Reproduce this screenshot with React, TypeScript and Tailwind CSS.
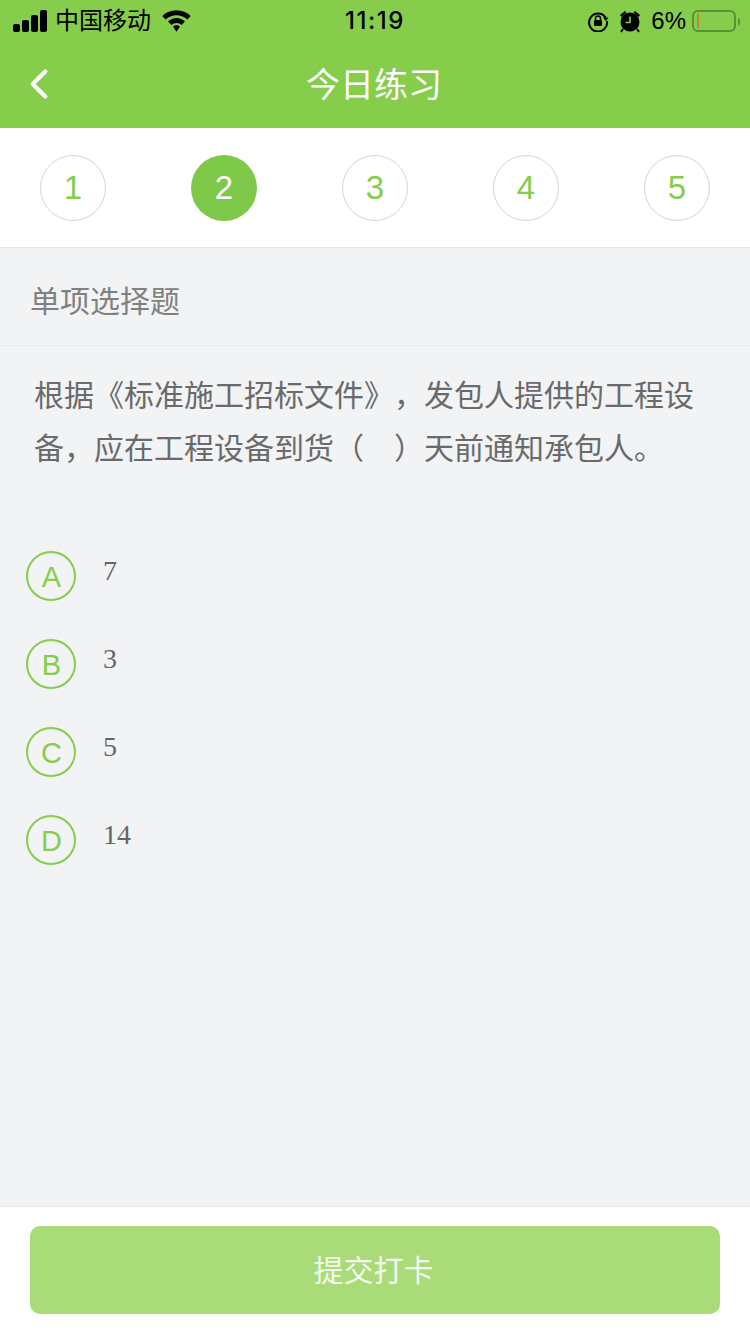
import { ChevronLeft } from 'lucide-react';

const SANS = "font-['Liberation_Sans','Noto_Sans_CJK_SC',sans-serif]";

const STEPS = [1, 2, 3, 4, 5];
const OPTIONS = [
  { key: 'A', text: '7' },
  { key: 'B', text: '3' },
  { key: 'C', text: '5' },
  { key: 'D', text: '14' },
];

function StatusBar() {
  return (
    <div className="flex h-10 items-center justify-between pl-[13px] pr-[10px] pt-[2px] text-black">
      <div className="flex flex-1 items-center">
        <svg width="34" height="22" viewBox="0 0 34 22" fill="currentColor">
          <rect x="0" y="14" width="7" height="8" rx="2" />
          <rect x="9" y="10" width="7" height="12" rx="2" />
          <rect x="18" y="5" width="7" height="17" rx="2" />
          <rect x="27" y="0" width="7" height="22" rx="2" />
        </svg>
        <span className="ml-2 text-[24px] leading-none">中国移动</span>
        <svg className="ml-[11px]" width="29" height="22" viewBox="0 0 30 22" fill="currentColor">
          <path d="M15 0C9.2 0 4.1 2.2.3 5.9l3.4 3.6C6.6 6.700 10.600 5 15 5s8.400 1.700 11.300 4.500l3.400-3.600C25.900 2.200 20.800 0 15 0z" />
          <path d="M15 8c-3.300 0-6.400 1.300-8.700 3.500l3.400 3.600c1.400-1.300 3.300-2.100 5.300-2.100s3.900.8 5.300 2.100l3.400-3.600C21.400 9.300 18.300 8 15 8z" />
          <path d="M15 15.500c-1.400 0-2.600.5-3.500 1.400L15 22l3.500-5.100c-.9-.9-2.100-1.400-3.500-1.400z" />
        </svg>
      </div>
      <span className="pr-[3px] font-['Inter',sans-serif] text-[24px] font-medium leading-none tracking-[1.5px]">11:19</span>
      <div className="flex flex-1 items-center justify-end">
        <svg width="22" height="22" viewBox="0 0 22 22" fill="none" stroke="currentColor" strokeWidth="2">
          <path d="M18.600 7.500A9 9 0 1 0 20 11" />
          <path d="M16 7.500h5.500l-2.700 3.500z" fill="currentColor" stroke="none" />
          <rect x="7" y="10" width="8" height="6" rx="1" fill="currentColor" stroke="none" />
          <path d="M8.500 10V8.500a2.500 2.500 0 0 1 5 0V10" strokeWidth="1.400" />
        </svg>
        <svg className="ml-[10px]" width="22" height="24" viewBox="0 0 22 24" fill="currentColor">
          <circle cx="11" cy="13" r="9.500" />
          <path d="M1 6l5-4 1.500 1.500-5 4.500zM21 6l-5-4-1.500 1.500 5 4.500z" />
          <path d="M4 20l-2 3M18 20l2 3" stroke="currentColor" strokeWidth="1.800" />
          <path d="M11 7.500V13.500H6.500" fill="none" stroke="#86cd4b" strokeWidth="1.600" />
        </svg>
        <span className="ml-[10px] text-[24px] leading-none">6%</span>
        <div className="ml-[6px] flex items-center">
          <div className="flex h-[22px] w-[44px] items-center rounded-[6px] border-2 border-[#5b8f38] pl-[3px]">
            <div className="h-[14px] w-[2px] bg-[#c9803a]" />
          </div>
          <div className="ml-[2px] h-[7px] w-[2px] rounded-r-sm bg-[#5b8f38]" />
        </div>
      </div>
    </div>
  );
}

export default function App() {
  return (
    <div className={`flex h-[1334px] w-[750px] flex-col bg-[#f2f3f5] ${SANS}`}>
      {/* Header */}
      <div className="h-[128px] bg-[#86cd4b]">
        <StatusBar />
        <div className="relative flex h-[88px] items-center justify-center pt-[1px] pr-[2px]">
          <ChevronLeft className="absolute left-[14px] top-[19px]" color="#ffffff" size={50} strokeWidth={2} />
          <span className="text-[34px] leading-none text-white">今日练习</span>
        </div>
      </div>

      {/* Steps */}
      <div className="flex h-[120px] items-start justify-between border-b border-[#e5e5e5] bg-white px-[40px] pt-[27px]">
        {STEPS.map((n) => (
          <div
            key={n}
            className={
              n === 2
                ? 'flex size-[66px] items-center justify-center rounded-full bg-[#7ec84a] text-[33px] text-white'
                : 'flex size-[66px] items-center justify-center rounded-full border border-[#d4d4d4] text-[33px] text-[#86cd4b]'
            }
          >
            {n}
          </div>
        ))}
      </div>

      {/* Question type */}
      <div className="flex h-[98px] items-center border-b border-[#e8e8e8] pl-[30px] pt-[10px] text-[30px] text-[#808080]">
        单项选择题
      </div>

      {/* Stem */}
      <p className="mt-[23px] px-[34px] text-[30px] leading-[53px] text-[#6a6a6a] [font-feature-settings:'chws'_0] [text-spacing-trim:space-all]">
        根据《标准施工招标文件》，发包人提供的工程设备，应在工程设备到货（　）天前通知承包人。
      </p>

      {/* Options */}
      <div className="mt-[76px] flex flex-1 flex-col gap-[38px] pl-[26px]">
        {OPTIONS.map((o) => (
          <div key={o.key} className="flex items-start">
            <div className="flex size-[50px] items-center justify-center rounded-full border-2 border-[#86cd4b] pl-[1px] pt-[3px] text-[29px] text-[#86cd4b]">
              {o.key}
            </div>
            <span className="ml-[27px] font-['Liberation_Serif',serif] text-[28px] leading-[40px] text-[#666666]">
              {o.text}
            </span>
          </div>
        ))}
      </div>

      {/* Footer */}
      <div className="flex h-[128px] items-start justify-center border-t border-[#e8e8e8] bg-white pt-[19px]">
        <button
          type="button"
          className="h-[88px] w-[690px] rounded-[10px] bg-[#a9dc78] pr-[3px] text-[30px] text-[#f4faee]"
        >
          提交打卡
        </button>
      </div>
    </div>
  );
}
